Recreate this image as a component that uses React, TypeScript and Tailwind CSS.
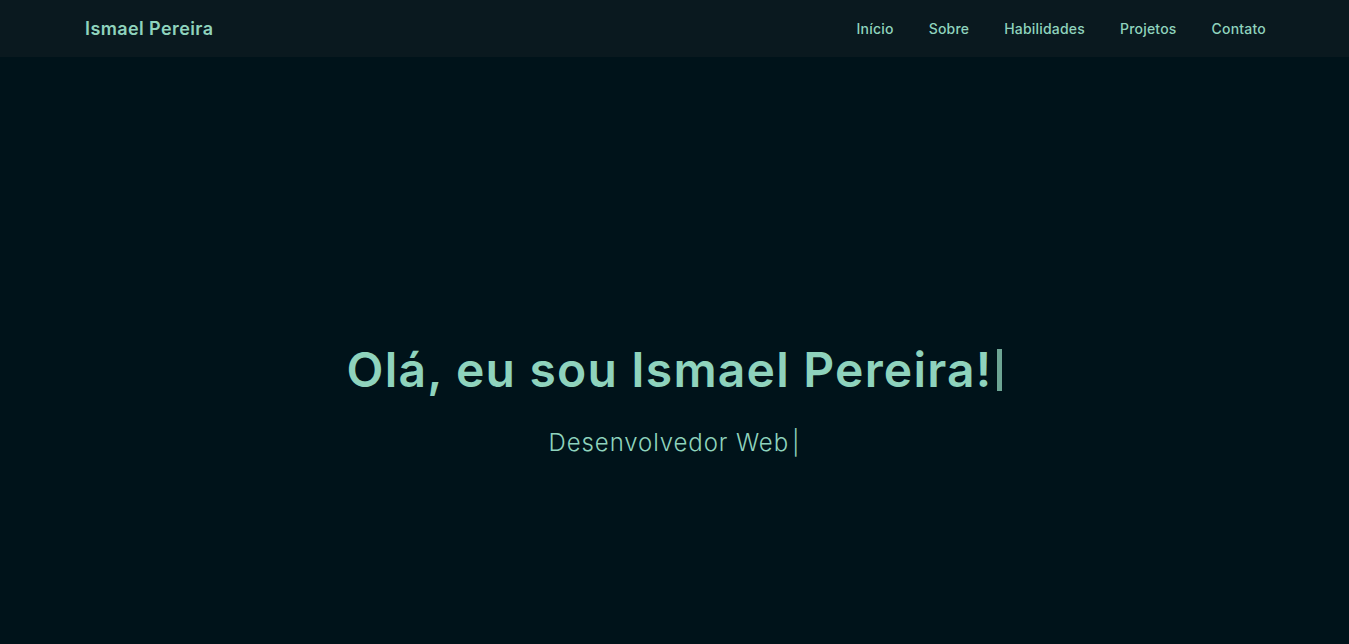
import React from 'react';

const links = ['Início', 'Sobre', 'Habilidades', 'Projetos', 'Contato'];

export default function App() {
  return (
    <div className="min-h-screen bg-[#00131a] font-['Inter','Noto_Sans',sans-serif] text-[#8fd3bd]">
      <header className="h-[57px] bg-[#0a191f] flex items-center justify-between pl-[85px] pr-[83px]">
        <span className="text-[18px] font-semibold tracking-[0.4px] text-[#8fd3bd]">Ismael Pereira</span>
        <nav className="flex items-center gap-[35px] text-[14px] font-medium tracking-[0.2px] text-[#8fd3bd]">
          {links.map((l) => (
            <a key={l} href="#" className="hover:text-white">
              {l}
            </a>
          ))}
        </nav>
      </header>

      <section className="flex flex-col items-center pt-[289px]">
        <h1 className="text-[48px] leading-none font-semibold tracking-[1.2px] text-[#8fd3bd] flex items-center">
          Olá, eu sou Ismael Pereira!
          <span className="inline-block w-[5px] h-[42px] bg-[#6da594] ml-[5px]" />
        </h1>
        <p className="mt-[33px] text-[24px] leading-8 font-light tracking-[0.9px] text-[#8fd3bd]">
          Desenvolvedor Web<span className="ml-[3px]">|</span>
        </p>
      </section>
    </div>
  );
}
